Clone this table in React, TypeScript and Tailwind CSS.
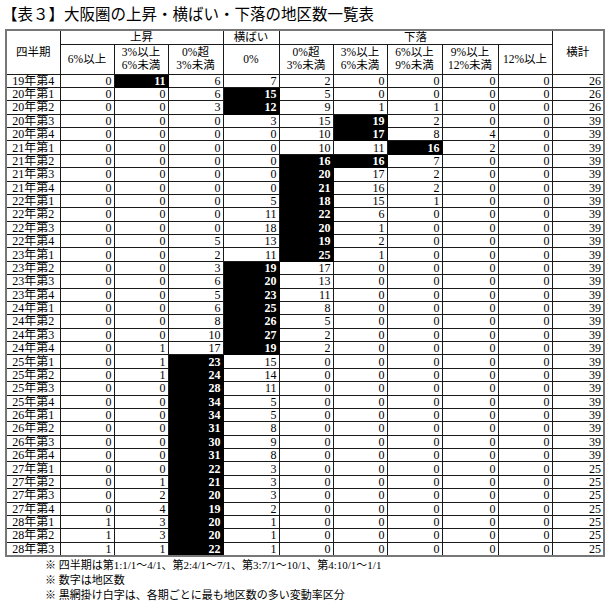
import React from 'react';

type Row = { label: string; values: number[]; marks: number[] };

// 列: 上昇(6%以上, 3%以上6%未満, 0%超3%未満), 横ばい, 下落(0%超3%未満, 3%以上6%未満, 6%以上9%未満, 9%以上12%未満, 12%以上), 横計
const rows: Row[] = [
  { label: '19年第4', values: [0, 11, 6, 7, 2, 0, 0, 0, 0, 26], marks: [1] },
  { label: '20年第1', values: [0, 0, 6, 15, 5, 0, 0, 0, 0, 26], marks: [3] },
  { label: '20年第2', values: [0, 0, 3, 12, 9, 1, 1, 0, 0, 26], marks: [3] },
  { label: '20年第3', values: [0, 0, 0, 3, 15, 19, 2, 0, 0, 39], marks: [5] },
  { label: '20年第4', values: [0, 0, 0, 0, 10, 17, 8, 4, 0, 39], marks: [5] },
  { label: '21年第1', values: [0, 0, 0, 0, 10, 11, 16, 2, 0, 39], marks: [6] },
  { label: '21年第2', values: [0, 0, 0, 0, 16, 16, 7, 0, 0, 39], marks: [4, 5] },
  { label: '21年第3', values: [0, 0, 0, 0, 20, 17, 2, 0, 0, 39], marks: [4] },
  { label: '21年第4', values: [0, 0, 0, 0, 21, 16, 2, 0, 0, 39], marks: [4] },
  { label: '22年第1', values: [0, 0, 0, 5, 18, 15, 1, 0, 0, 39], marks: [4] },
  { label: '22年第2', values: [0, 0, 0, 11, 22, 6, 0, 0, 0, 39], marks: [4] },
  { label: '22年第3', values: [0, 0, 0, 18, 20, 1, 0, 0, 0, 39], marks: [4] },
  { label: '22年第4', values: [0, 0, 5, 13, 19, 2, 0, 0, 0, 39], marks: [4] },
  { label: '23年第1', values: [0, 0, 2, 11, 25, 1, 0, 0, 0, 39], marks: [4] },
  { label: '23年第2', values: [0, 0, 3, 19, 17, 0, 0, 0, 0, 39], marks: [3] },
  { label: '23年第3', values: [0, 0, 6, 20, 13, 0, 0, 0, 0, 39], marks: [3] },
  { label: '23年第4', values: [0, 0, 5, 23, 11, 0, 0, 0, 0, 39], marks: [3] },
  { label: '24年第1', values: [0, 0, 6, 25, 8, 0, 0, 0, 0, 39], marks: [3] },
  { label: '24年第2', values: [0, 0, 8, 26, 5, 0, 0, 0, 0, 39], marks: [3] },
  { label: '24年第3', values: [0, 0, 10, 27, 2, 0, 0, 0, 0, 39], marks: [3] },
  { label: '24年第4', values: [0, 1, 17, 19, 2, 0, 0, 0, 0, 39], marks: [3] },
  { label: '25年第1', values: [0, 1, 23, 15, 0, 0, 0, 0, 0, 39], marks: [2] },
  { label: '25年第2', values: [0, 1, 24, 14, 0, 0, 0, 0, 0, 39], marks: [2] },
  { label: '25年第3', values: [0, 0, 28, 11, 0, 0, 0, 0, 0, 39], marks: [2] },
  { label: '25年第4', values: [0, 0, 34, 5, 0, 0, 0, 0, 0, 39], marks: [2] },
  { label: '26年第1', values: [0, 0, 34, 5, 0, 0, 0, 0, 0, 39], marks: [2] },
  { label: '26年第2', values: [0, 0, 31, 8, 0, 0, 0, 0, 0, 39], marks: [2] },
  { label: '26年第3', values: [0, 0, 30, 9, 0, 0, 0, 0, 0, 39], marks: [2] },
  { label: '26年第4', values: [0, 0, 31, 8, 0, 0, 0, 0, 0, 39], marks: [2] },
  { label: '27年第1', values: [0, 0, 22, 3, 0, 0, 0, 0, 0, 25], marks: [2] },
  { label: '27年第2', values: [0, 1, 21, 3, 0, 0, 0, 0, 0, 25], marks: [2] },
  { label: '27年第3', values: [0, 2, 20, 3, 0, 0, 0, 0, 0, 25], marks: [2] },
  { label: '27年第4', values: [0, 4, 19, 2, 0, 0, 0, 0, 0, 25], marks: [2] },
  { label: '28年第1', values: [1, 3, 20, 1, 0, 0, 0, 0, 0, 25], marks: [2] },
  { label: '28年第2', values: [1, 3, 20, 1, 0, 0, 0, 0, 0, 25], marks: [2] },
  { label: '28年第3', values: [1, 1, 22, 1, 0, 0, 0, 0, 0, 25], marks: [2] },
];

const colWidths = ['w-[54px]', 'w-[54px]', 'w-[54px]', 'w-[55px]', 'w-[56px]', 'w-[54px]', 'w-[54px]', 'w-[55px]', 'w-[56px]', 'w-[54px]', 'w-[52px]'];

const subHeads: string[][] = [
  ['6%以上'],
  ['3%以上', '6%未満'],
  ['0%超', '3%未満'],
  ['0%'],
  ['0%超', '3%未満'],
  ['3%以上', '6%未満'],
  ['6%以上', '9%未満'],
  ['9%以上', '12%未満'],
  ['12%以上'],
];

const cell = 'border border-[#1a1a1a] p-0';

export default function App() {
  return (
    <div className="w-[610px] h-[608px] bg-white text-black font-['Liberation_Serif','Noto_Sans_CJK_JP',serif] overflow-hidden">
      <h1 className="pl-[2px] pt-[5px] h-[29px] text-[15.5px] leading-[19px] font-normal">
        【表３】大阪圏の上昇・横ばい・下落の地区数一覧表
      </h1>

      <table className="ml-[5px] w-[598px] table-fixed border-collapse border-2 border-[#777]">
        <colgroup>
          {colWidths.map((w, i) => (
            <col key={i} className={w} />
          ))}
        </colgroup>
        <thead>
          <tr className="h-[14px] text-[11.5px] leading-[12px]">
            <th rowSpan={2} className={`${cell} font-normal`}>四半期</th>
            <th colSpan={3} className={`${cell} font-normal`}>上昇</th>
            <th className={`${cell} font-normal`}>横ばい</th>
            <th colSpan={5} className={`${cell} font-normal`}>下落</th>
            <th rowSpan={2} className={`${cell} font-normal`}>横計</th>
          </tr>
          <tr className="h-[30px] text-[11.5px] leading-[13px]">
            {subHeads.map((lines, i) => (
              <th key={i} className={`${cell} font-normal`}>
                {lines.map((l, j) => (
                  <div key={j}>{l}</div>
                ))}
              </th>
            ))}
          </tr>
        </thead>
        <tbody>
          {rows.map((r) => (
            <tr key={r.label} className="h-[13.39px] text-[12px] leading-[12px]">
              <td className={`${cell} text-center`}>{r.label}</td>
              {r.values.map((v, i) => {
                const marked = r.marks.includes(i);
                return (
                  <td
                    key={i}
                    className={`${cell} pr-[2px] text-right ${marked ? 'bg-black text-white font-bold border-black' : ''}`}
                  >
                    {v}
                  </td>
                );
              })}
            </tr>
          ))}
        </tbody>
      </table>

      <div className="pl-[45px] pt-[1px] text-[11px] leading-[15px]">
        <p>※ 四半期は第1:1/1～4/1、第2:4/1～7/1、第3:7/1～10/1、第4:10/1～1/1</p>
        <p>※ 数字は地区数</p>
        <p>※ 黒網掛け白字は、各期ごとに最も地区数の多い変動率区分</p>
      </div>
    </div>
  );
}
